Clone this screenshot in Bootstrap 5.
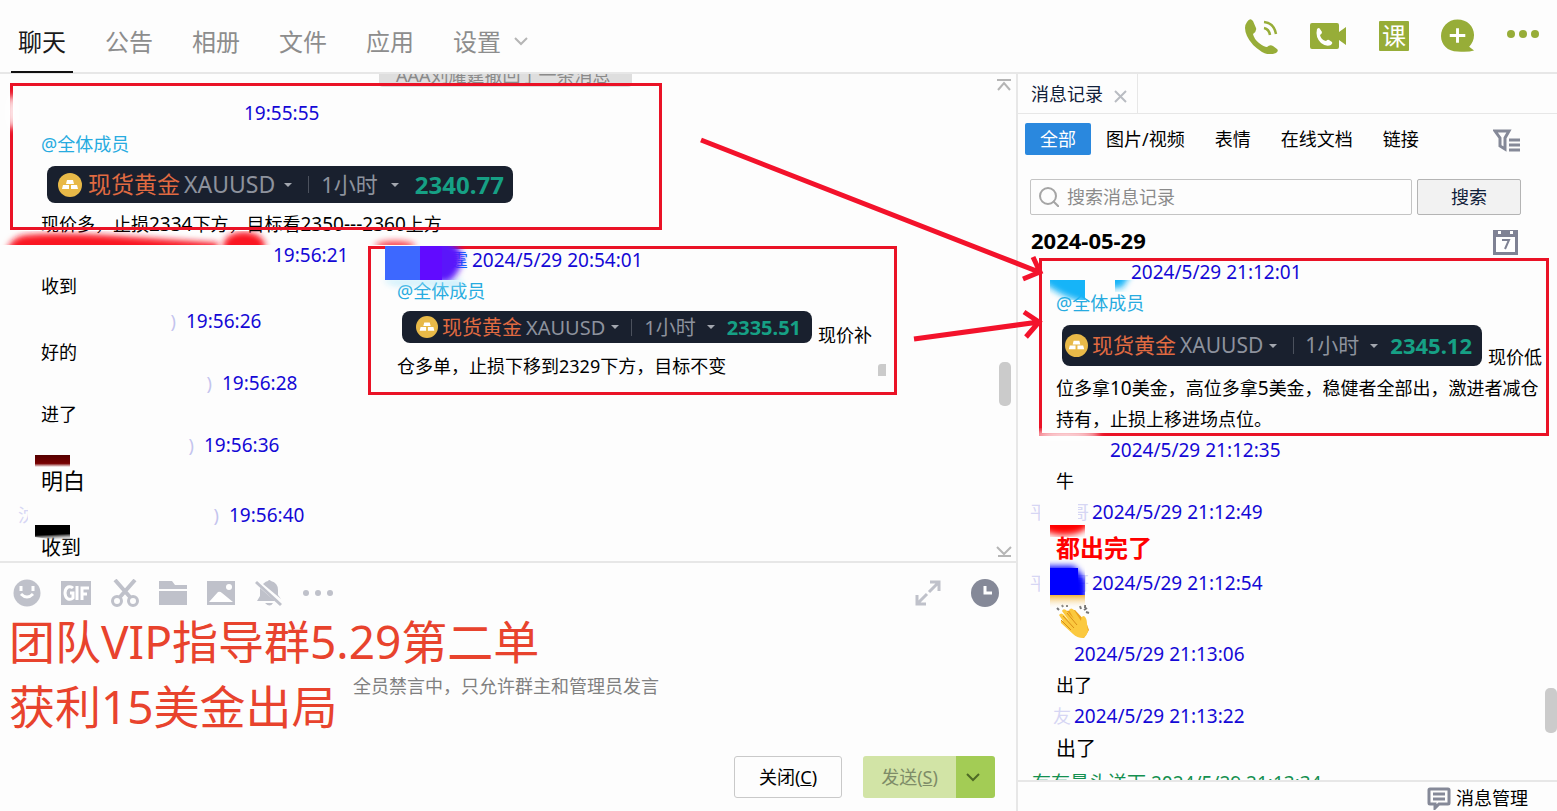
<!DOCTYPE html>
<html lang="zh-CN">
<head>
<meta charset="utf-8">
<meta name="viewport" content="width=device-width, initial-scale=1">
<title>群聊</title>
<link href="https://cdn.jsdelivr.net/npm/bootstrap@5.3.0/dist/css/bootstrap.min.css" rel="stylesheet">
<script src="https://cdn.jsdelivr.net/npm/bootstrap@5.3.0/dist/js/bootstrap.bundle.min.js"></script>
<style>
:root{--green:#97ad38;--line:#e7e7e7;--red:#ea1226;--tool:#bfc1ca;--slate:#858998}
body{font-family:"Noto Sans","Noto Sans CJK SC",sans-serif;font-size:18px;line-height:31px;color:#000;background:#fdfdfd;font-weight:400}
button,input{font-family:inherit}
svg{display:block;flex:none}
.plain{border:0;background:none;padding:0;line-height:1;color:inherit}
/* top bar */
.topbar{height:74px;border-bottom:2px solid var(--line)}
.main-tabs{gap:25px;padding-left:11px}
.main-tabs a{font-size:24px;line-height:30px;height:73px;padding:27px 7px 0;color:#8d8d8d;text-decoration:none;white-space:nowrap}
.main-tabs a.active{color:#1a1a1a;border-bottom:2px solid #111}
.call-tools{color:var(--green);padding-right:18px;gap:32px}
.class-btn{width:30px;height:30px;background:var(--green);color:#fff;font-size:24px;line-height:28px;border-radius:1px}
/* chat */
.chat-log{border-bottom:2px solid var(--line);padding:24px 0 0 18px}
.msg-time{font-size:19px;color:#1408d6;white-space:nowrap}
.who{color:#c4c4ee;height:31px;overflow:hidden;flex:none}
.who i{font-style:normal;display:block;overflow:hidden;color:#d6d6f4}
.sliver{width:10px}
.half{width:11px;direction:rtl}
.who-0{width:226px}.who-1{width:255px}.who-2{width:158px}.who-3{width:194px}.who-4{width:176px}.who-5{width:201px}
.who-a{width:98px}.who-b{width:77px}.who-c{width:59px}.who-d{width:41px}
.body-in{padding-left:23px}
.body-log{padding-left:26px}
.gap-x{gap:10px}
.at-all{color:#27abe0}
.num{font-size:19px}
.t20{font-size:20px;line-height:33px}
.t22{font-size:22px;line-height:39px}
.t24{font-size:24px;line-height:40px;color:#f00;font-weight:700}
.notice{top:-14px;left:379px;width:253px;height:27px;padding:0 17px;font-size:18px;line-height:30px;color:#8a8a8a;background:#dedede;border-radius:4px;white-space:nowrap}
.mark-box{border:3px solid var(--red);pointer-events:none}
.mark-a{left:10px;top:9px;width:652px;height:147px}
.mark-b{left:368px;top:172px;width:529px;height:149px;background:#fdfdfd}
.mark-c{left:21px;top:3px;width:510px;height:178px}
.quote{display:inline-flex;align-items:center;background:#19202e;color:#8d929d;border-radius:8px;white-space:nowrap}
.quote .cn{color:#e06a41}
.quote .price{color:#16a085;font-weight:700}
.quote .bar{width:1px;height:17px;background:#4b515d}
.q-a{height:37px;width:466px;padding-left:11px;font-size:23px;margin:6px 6px}
.q-b{height:32px;width:410px;padding-left:14px;font-size:20px;margin:0 0 8px 5px}
.q-c{height:41px;width:420px;padding-left:3px;font-size:21px;margin:0 0 7px 6px}
.q-a .per{font-size:22px}.q-a .price{font-size:24px}
.q-c .price{font-size:22px}
.caret{width:0;height:0;border:4px solid transparent;border-top-color:#a3a7af;border-bottom:0}
.g1{margin-left:4px}.g2{margin-left:6px}.g3{margin-left:16px}.g4{margin-left:12px}.g5{margin-left:11px}
.q-a .caret{margin-left:9px}.q-a .per+.caret{margin-left:13px}.q-a .price{margin-left:16px}
.blot{pointer-events:none}
.thumb{background:#cbcbcb;border-radius:5px;width:12px}
.composer{height:248px}
.edit-tools{color:var(--tool);height:60px;padding:0 17px 0 13px}
.headline{left:9px;top:46px;font-size:46px;line-height:65px;color:#e8432d;white-space:nowrap}
.muted-note{color:#808080;height:133px;padding:48px 4px 0 0}
.btn-line{height:42px;width:108px;font-size:18px;line-height:28px;padding:0;border:1px solid #c9c9c9;border-radius:3px;background:#fdfdfd}
.btn-send{height:42px;width:93px;padding:0;border:0;border-radius:3px 0 0 3px;background:#d2e4a6;color:#7e8c68}
.btn-more{height:42px;width:39px;padding:0 5px 0 0;border:0;border-radius:0 3px 3px 0;background:#a3cc55}
/* history */
.history{width:541px;border-left:2px solid var(--line)}
.hist-tab{height:40px;padding:0 10px 0 13px;border-right:1px solid var(--line);color:#10203a;gap:11px}
.hist-tabs{border-bottom:1px solid var(--line);height:40px}
.kinds button{border:0;background:none;height:32px;padding:0 15px;line-height:30px;border-radius:2px}
.kinds button.active{background:#2a88de;color:#fff}
.search-in{height:36px;border:1px solid #c4c4c4;border-radius:2px;background:#fdfdfd}
.search-in input{border:0;outline:0;background:none;width:100%;font-size:18px;line-height:28px;padding:0 0 0 8px}
.search-in input::placeholder{color:#8b8b8b;opacity:1}
.search-go{width:104px;height:36px;border:1px solid #b4b4b4;border-radius:2px;background:#f2f2f2;color:#10203a;line-height:28px}
.day{font-size:22px;font-weight:700;line-height:30px}
.hist-foot{height:31px;border-top:2px solid var(--line);padding-right:29px;gap:5px}
.green{color:#149050;font-size:19px;padding:3px 0 0 2px}
</style>
</head>
<body class="vh-100 d-flex flex-column overflow-hidden">
<header class="topbar d-flex justify-content-between flex-shrink-0">
  <nav class="main-tabs d-flex">
    <a href="#" class="active">聊天</a><a href="#">公告</a><a href="#">相册</a><a href="#">文件</a><a href="#">应用</a>
    <a href="#" class="d-flex gap-2">设置 <svg class="ms-1" width="16" height="28" viewBox="0 0 16 28" fill="none" stroke="#b5b5b5" stroke-width="2"><path d="M2 11l6 6 6-6"/></svg></a>
  </nav>
  <div class="call-tools d-flex align-items-center">
    <button class="plain" aria-label="语音通话"><svg width="34" height="36" viewBox="0 0 34 36" fill="currentColor"><path d="M3 4Q6 -1 9 3l3 7q1 3-3 6 1 5 6 9t8 4q3-3 6-1l4 3q2 2-1 4-7 3-14-1Q7 27 3 18-1 9 3 4z"/><path d="M20 10q5 1 6 7M20 4q10 1 12 12" fill="none" stroke="currentColor" stroke-width="2.500"/></svg></button>
    <button class="plain" aria-label="视频通话"><svg width="37" height="28" viewBox="0 0 37 28"><path fill="currentColor" d="M2 1h25q2 0 2 2v7l7-5v18l-7-5v7q0 2-2 2H2q-2 0-2-2V3q0-2 2-2z"/><path fill="#fff" d="M7 7q2-2 3 0l2 3q0 2-2 3 1 5 6 6 2-2 3-1l3 2q1 1-1 3-5 2-10-2-6-6-4-14z"/></svg></button>
    <button class="plain class-btn" aria-label="课堂"><span class="d-block">课</span></button>
    <button class="plain" aria-label="添加"><svg width="34" height="34" viewBox="0 0 35 34"><path fill="currentColor" d="M17 0c10 0 17 7 17 16 0 5-2 9-5 12l5 4q-6 2-17 1C7 33 0 26 0 17S7 0 17 0z"/><path stroke="#fff" stroke-width="3" d="M17 9v15M9 16.500h16"/></svg></button>
    <button class="plain" aria-label="更多"><svg width="32" height="14" viewBox="0 0 32 14" fill="currentColor"><circle cx="4" cy="5" r="4"/><circle cx="16" cy="5" r="4"/><circle cx="28" cy="5" r="4"/></svg></button>
  </div>
</header>

<main class="d-flex flex-grow-1" style="min-height:0">
  <section class="d-flex flex-column flex-grow-1" style="min-width:0">
    <div class="chat-log position-relative flex-grow-1 overflow-hidden">
      <div class="notice position-absolute">AAA刘耀霆撤回了一条消息</div>
      <article>
        <div class="d-flex"><span class="who who-0"></span><time class="msg-time">19:55:55</time></div>
        <div class="body-in">
          <div class="at-all">@全体成员</div>
          <div class="quote q-a"><svg width="24" height="24" viewBox="0 0 24 24"><circle cx="12" cy="12" r="12" fill="#e8b948"/><path fill="#fff" d="M9 7h6l1 4H8zM5 12h6v4H4zM13 12h6l1 4h-7z"/></svg><span class="cn g2">现货黄金</span><span class="g1">XAUUSD</span><i class="caret g2"></i><i class="bar g3"></i><span class="per g4">1小时</span><i class="caret g5"></i><span class="price">2340.77</span></div>
          <div>现价多，止损<span class="num">2334</span>下方，目标看<span class="num">2350---2360</span>上方</div>
        </div>
      </article>
      <article class="mb-1"><div class="d-flex"><span class="who who-1"></span><time class="msg-time">19:56:21</time></div><div class="body-in">收到</div></article>
      <article><div class="d-flex gap-x"><span class="who who-2 d-flex justify-content-end">)</span><time class="msg-time">19:56:26</time></div><div class="body-in">好的</div></article>
      <article><div class="d-flex gap-x"><span class="who who-3 d-flex justify-content-end">)</span><time class="msg-time">19:56:28</time></div><div class="body-in">进了</div></article>
      <article><div class="d-flex gap-x"><span class="who who-4 d-flex justify-content-end">)</span><time class="msg-time">19:56:36</time></div><div class="body-in t22">明白</div></article>
      <article><div class="d-flex gap-x"><span class="who who-5 d-flex justify-content-between"><i class="sliver">沈</i>)</span><time class="msg-time">19:56:40</time></div><div class="body-in t20">收到</div></article>

      <div class="mark-box mark-a position-absolute"></div>
      <svg class="blot position-absolute top-0 start-0" width="480" height="487" viewBox="0 74 480 487">
        <defs>
          <filter id="soft" x="-20%" y="-60%" width="140%" height="220%"><feGaussianBlur stdDeviation="3"/></filter>
          <clipPath id="cut"><path d="M0 231h480v14H0z"/></clipPath>
          <linearGradient id="dr" x2="0" y2="1"><stop stop-color="#500"/><stop offset=".7" stop-color="#700"/><stop offset="1" stop-color="#fff"/></linearGradient>
          <linearGradient id="bk" x2=".1" y2="1"><stop offset=".6" stop-color="#000"/><stop offset="1" stop-color="#fff" stop-opacity="0"/></linearGradient>
        </defs>
        <ellipse cx="12" cy="112" rx="5" ry="17" fill="#fff" filter="url(#soft)"/>
        <g clip-path="url(#cut)" fill="#fa1224"><path filter="url(#soft)" d="M6 254q4-18 22-19 30-3 90 1l100 7v12H6z"/><ellipse filter="url(#soft)" cx="244" cy="246" rx="21" ry="14"/><ellipse filter="url(#soft)" cx="395" cy="246" rx="20" ry="5" opacity=".8"/></g>
        <path d="M35 455h35v12H35z" fill="url(#dr)"/>
        <path d="M35 525h35v17l-35-5z" fill="url(#bk)"/>
      </svg>

      <div class="mark-box mark-b position-absolute">
        <svg class="blot position-absolute" style="left:0;top:-3px" width="110" height="50" viewBox="371 246 110 50"><defs><clipPath id="c2"><path d="M385 245h90v35h-90z"/></clipPath></defs><path d="M385 282q10 6 34 4l43 3v-10h-77z" fill="#9fe3fb" filter="url(#soft)" opacity=".5"/><g clip-path="url(#c2)"><path d="M420 240h24q20 6 18 20t-14 22h-28z" fill="#5a14fa" filter="url(#soft)"/><path d="M385 245h35v35h-35z" fill="#3d68ff"/><path d="M420 245h22v35h-22z" fill="#610bff"/></g></svg>
        <div class="d-flex" style="height:27px;line-height:22px;padding-left:79px"><span class="text-primary">霆</span><time class="msg-time ms-1">2024/5/29 20:54:01</time></div>
        <div class="body-log">
          <div class="at-all" style="line-height:30px">@全体成员</div>
          <div class="d-flex align-items-end" style="height:45px"><div class="quote q-b"><svg width="22" height="22" viewBox="0 0 24 24"><circle cx="12" cy="12" r="12" fill="#e8b948"/><path fill="#fff" d="M9 7h6l1 4H8zM5 12h6v4H4zM13 12h6l1 4h-7z"/></svg><span class="cn g1">现货黄金</span><span class="g1">XAUUSD</span><i class="caret g2"></i><i class="bar g4"></i><span class="g4">1小时</span><i class="caret g5"></i><span class="price g4">2335.51</span></div><span class="g2 text-nowrap">现价补</span></div>
          <div>仓多单，止损下移到2329下方，目标不变</div>
        </div>
        <i class="position-absolute end-0 bottom-0 me-2 mb-3" style="width:8px;height:12px;border-radius:3px 0 0 0;background:#cbcbcb"></i>
      </div>

      <svg class="position-absolute end-0 top-0 mt-1 me-1" width="16" height="14" viewBox="0 0 16 14" fill="none" stroke="#b5b5b5" stroke-width="2"><path d="M1 2h14M2 12l6-7 6 7"/></svg>
      <div class="thumb position-absolute" style="right:5px;top:288px;height:44px"></div>
      <svg class="position-absolute end-0 bottom-0 mb-1 me-1" width="16" height="12" viewBox="0 0 16 12" fill="none" stroke="#b5b5b5" stroke-width="2"><path d="M2 11h13M1 2l7 7 7-7"/></svg>
    </div>

    <div class="composer position-relative flex-shrink-0">
      <div class="edit-tools d-flex align-items-center justify-content-between">
        <div class="d-flex align-items-center" style="gap:20px">
          <button class="plain" aria-label="表情"><svg width="28" height="28" viewBox="0 0 28 28"><circle cx="14" cy="14" r="13.500" fill="currentColor"/><path d="M8 7v5M20 7v5M8 15q6 6 12 0" stroke="#fff" stroke-width="3" fill="none"/></svg></button>
          <button class="plain" aria-label="GIF"><svg width="30" height="26" viewBox="0 0 30 26"><path fill="currentColor" d="M0 1h30v24H0z"/><path d="M12 8q-2-2-5-1-3 2-3 6t3 6q3 1 5-1v-5H9M16 6v14M21 20V8h7M21 14h5" fill="none" stroke="#fff" stroke-width="3"/></svg></button>
          <button class="plain" aria-label="截图"><svg width="28" height="28" viewBox="0 0 28 28" fill="none" stroke="currentColor" stroke-width="3"><circle cx="6" cy="22" r="4.500"/><circle cx="22" cy="22" r="4.500"/><path stroke-width="4" d="M9 18L24 1M19 18L4 1"/></svg></button>
          <button class="plain" aria-label="文件"><svg width="28" height="26" viewBox="0 0 28 26" fill="currentColor"><path d="M0 1h13l3 4h12v4H0zM0 11h28v14H0z"/></svg></button>
          <button class="plain" aria-label="图片"><svg width="28" height="26" viewBox="0 0 28 26"><path fill="currentColor" d="M0 1h28v24H0z"/><circle cx="22" cy="7" r="3" fill="#fff"/><path fill="#fff" d="M2 22l9-10q2-1 4 1l11 9z"/></svg></button>
          <button class="plain" aria-label="免打扰"><svg width="28" height="28" viewBox="0 0 28 28" fill="currentColor"><path d="M8 5q3-3 5-3 1-2 3 0 7 2 7 9v5l3 4zM5 9l15 13H2l3-5zM10 24h8q-3 5-8 0z"/><path d="M1 3l25 23" stroke="currentColor" stroke-width="3"/></svg></button>
          <button class="plain" aria-label="更多"><svg width="32" height="12" viewBox="0 0 32 12" fill="currentColor"><circle cx="3" cy="6" r="3"/><circle cx="15" cy="6" r="3"/><circle cx="27" cy="6" r="3"/></svg></button>
        </div>
        <div class="d-flex align-items-center" style="gap:30px">
          <button class="plain" aria-label="展开"><svg width="26" height="26" viewBox="0 0 26 26" fill="none" stroke="currentColor" stroke-width="3"><path d="M15 2h9v9M24 2l-10 10M2 15v9h9M2 24l10-10"/></svg></button>
          <button class="plain" aria-label="聊天记录"><svg width="28" height="28" viewBox="0 0 28 28"><circle cx="14" cy="14" r="14" fill="#858998"/><path d="M14 7v7h7" fill="none" stroke="#fff" stroke-width="3"/></svg></button>
        </div>
      </div>
      <div class="muted-note text-center">全员禁言中，只允许群主和管理员发言</div>
      <div class="d-flex justify-content-end" style="padding-right:21px">
        <button class="btn-line">关闭(<u>C</u>)</button>
        <button class="btn-send" style="margin-left:21px">发送(<u>S</u>)</button><button class="btn-more" aria-label="发送选项"><svg class="mx-auto" width="16" height="10" viewBox="0 0 16 10" fill="none" stroke="#4e6a25" stroke-width="2"><path d="M2 2l6 6 6-6"/></svg></button>
      </div>
      <div class="headline position-absolute">团队VIP指导群5.29第二单<br>获利15美金出局</div>
    </div>
  </section>

  <aside class="history position-relative d-flex flex-column flex-shrink-0">
    <div class="hist-tabs d-flex"><div class="hist-tab d-flex align-items-center">消息记录<button class="plain pt-1" aria-label="关闭"><svg width="13" height="13" viewBox="0 0 13 13" stroke="#b9bcc2" stroke-width="2"><path d="M1 1l11 11M12 1L1 12"/></svg></button></div></div>
    <div class="kinds d-flex align-items-center justify-content-between" style="padding:9px 37px 0 7px">
      <div class="d-flex"><button class="active">全部</button><button>图片/视频</button><button>表情</button><button>在线文档</button><button>链接</button></div>
      <svg class="mt-1" width="27" height="24" viewBox="0 0 27 24" fill="none" stroke="#858998" stroke-width="3"><path d="M2 2h14l-4 7v11l-5-3V9zM16 11h11M16 16h11M16 21h11"/></svg>
    </div>
    <form class="d-flex" style="padding:24px 36px 0 12px;gap:5px">
      <label class="search-in d-flex align-items-center flex-grow-1 ps-2"><svg width="20" height="20" viewBox="0 0 20 20" fill="none" stroke="#a5a5a5" stroke-width="2"><circle cx="9" cy="9" r="8"/><path d="M14 14l6 6"/></svg><input type="text" aria-label="搜索消息记录" placeholder="搜索消息记录"></label>
      <button type="button" class="search-go">搜索</button>
    </form>
    <div class="d-flex justify-content-between align-items-center" style="padding:10px 39px 0 13px">
      <div class="day">2024-05-29</div>
      <svg class="mt-1" width="25" height="25" viewBox="0 0 25 25"><path fill="#7f8294" d="M0 0h25v25H0z"/><path fill="#fff" d="M3 7h19v15H3zM5 1h3v3H5zM17 1h3v3h-3z"/><path d="M9 10h7l-4 9" fill="none" stroke="#7f8294" stroke-width="2"/></svg>
    </div>
    <div class="position-relative flex-grow-1 overflow-hidden" style="min-height:0;padding:2px 0 0 12px">
      <article>
        <div class="d-flex"><span class="who who-a"></span><time class="msg-time" style="padding-left:3px">2024/5/29 21:12:01</time></div>
        <div class="body-log">
          <div class="at-all">@全体成员</div>
          <div class="d-flex align-items-end" style="height:54px"><div class="quote q-c"><svg width="23" height="23" viewBox="0 0 24 24"><circle cx="12" cy="12" r="12" fill="#e8b948"/><path fill="#fff" d="M9 7h6l1 4H8zM5 12h6v4H4zM13 12h6l1 4h-7z"/></svg><span class="cn g1">现货黄金</span><span class="g1">XAUUSD</span><i class="caret g2"></i><i class="bar g3"></i><span class="g5">1小时</span><i class="caret g5"></i><span class="price g4">2345.12</span></div><span class="g2 text-nowrap">现价低</span></div>
          <div class="text-nowrap">位多拿<span class="num">10</span>美金，高位多拿<span class="num">5</span>美金，稳健者全部出，激进者减仓<br>持有，止损上移进场点位。</div>
        </div>
      </article>
      <article><div class="d-flex"><span class="who who-b"></span><time class="msg-time" style="padding-left:3px">2024/5/29 21:12:35</time></div><div class="body-log">牛</div></article>
      <article><div class="d-flex"><span class="who who-c d-flex justify-content-between"><i class="sliver">平</i><i class="half">哥</i></span><time class="msg-time" style="padding-left:3px">2024/5/29 21:12:49</time></div><div class="body-log t24">都出完了</div></article>
      <article><div class="d-flex"><span class="who who-c d-flex justify-content-between"><i class="sliver">平</i><i class="half">哥</i></span><time class="msg-time" style="padding-left:3px">2024/5/29 21:12:54</time></div>
        <div class="body-log" style="height:40px;padding-top:4px"><svg role="img" aria-label="鼓掌" width="34" height="36" viewBox="0 0 34 36"><path fill="#eaa21f" d="M10 8l9-1 11 12 3 8-5 8-9-3z"/><path fill="#fbc93f" d="M3 12q2-3 5 0l6 7-8-11q1-3 4-1l8 9-5-9q2-3 5 0l7 11q0-5 3-5 3 2 3 8l1 7q-1 5-5 7-6 0-10-4L5 20q-1-3 2-2z"/><path d="M5 17l10 10M7 13l11 12M11 10l10 12" stroke="#d98d16" fill="none"/><path d="M1 5l2 2M6 2l1 2M11 2v2M24 3l1 3M29 2v3M30 9l3 1M28 7l3-2" stroke="#777" stroke-width="2"/></svg></div></article>
      <article><div class="d-flex"><span class="who who-d"></span><time class="msg-time" style="padding-left:3px">2024/5/29 21:13:06</time></div><div class="body-log">出了</div></article>
      <article><div class="d-flex"><span class="who who-d d-flex justify-content-end"><i>友</i></span><time class="msg-time" style="padding-left:3px">2024/5/29 21:13:22</time></div><div class="body-log t20">出了</div></article>
      <div class="green">有有曼头送下 2024/5/29 21:13:34</div>

      <div class="mark-box mark-c position-absolute"></div>
      <svg class="blot position-absolute top-0 start-0" width="150" height="400" viewBox="1018 255 150 400">
        <defs><filter id="soft2" x="-30%" y="-30%" width="160%" height="160%"><feGaussianBlur stdDeviation="3"/></filter><clipPath id="c3"><path d="M1050 280h35v20h-35zM1115 280h20v12h-20z"/></clipPath><clipPath id="c4"><path d="M1050 525h35v12h-35zM1050 560h35v35h-35z"/></clipPath>
        <linearGradient id="yl" x2="0" y2="1"><stop stop-color="#f0b23a"/><stop offset="1" stop-color="#fdf3dc" stop-opacity="0"/></linearGradient></defs>
        <ellipse cx="1066" cy="435" rx="34" ry="4" fill="#fff" filter="url(#soft2)"/>
        <g clip-path="url(#c3)"><path d="M1040 266h96l-14 22h-30v16q-28-4-52-24z" fill="#12b4f8" filter="url(#soft2)"/></g>
        <g clip-path="url(#c4)"><ellipse cx="1064" cy="521" rx="26" ry="14" fill="#f00" filter="url(#soft2)"/><path d="M1040 566h34l12 14v32h-46z" fill="#00f" filter="url(#soft2)"/><path d="M1050 568h28v27h-28z" fill="#00f"/></g>
        <path d="M1050 595h35v13h-35z" fill="url(#yl)"/>
      </svg>
      <div class="thumb position-absolute end-0" style="bottom:47px;height:45px"></div>
    </div>
    <footer class="hist-foot d-flex align-items-center justify-content-end flex-shrink-0"><svg class="mt-1" width="24" height="23" viewBox="0 0 24 23" fill="none" stroke="#858998" stroke-width="3"><path d="M3 2h18q1 0 1 1v13q0 1-1 1h-9l-4 4v-4H3q-1 0-1-1V3q0-1 1-1zM6 7h12M6 12h12"/></svg><a href="#" class="text-black text-decoration-none pt-1">消息管理</a></footer>
    <svg class="blot position-absolute" style="left:-318px;top:56px" width="346" height="220" viewBox="701 131 346 220" fill="none" stroke="#f3122b" stroke-width="5"><path d="M702 141L1040 273M1034 258l7 15-17 7M915 340l125-17M1025 313l15 10-13 15"/></svg>
  </aside>
</main>
</body>
</html>
